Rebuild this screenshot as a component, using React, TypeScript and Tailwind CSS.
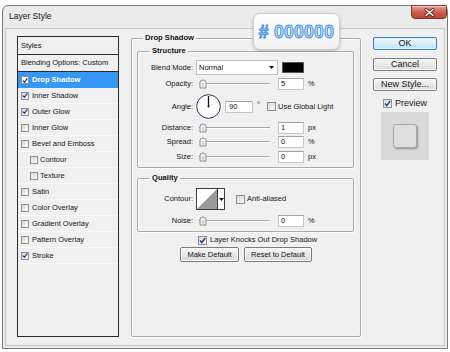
import React from 'react';

type CB = { checked?: boolean; size?: 'sm' | 'md'; active?: boolean };

function Check({ checked, size = 'sm', active }: CB) {
  const box =
    size === 'sm'
      ? 'w-[8px] h-[8px]'
      : 'w-[9px] h-[9px]';
  const bg = active
    ? 'bg-white border-[#8e8f8f]'
    : 'bg-linear-to-br from-[#d8d8d8] to-[#fafafa] border-[#8e8f8f]';
  return (
    <span className={`inline-flex shrink-0 items-center justify-center border ${box} ${bg}`}>
      {checked && (
        <svg width="7" height="7" viewBox="0 0 7 7">
          <path d="M1 3.6 L2.8 5.6 L6.2 1" fill="none" stroke="#1d3c8f" strokeWidth="1.5" />
        </svg>
      )}
    </span>
  );
}

function Group({
  title,
  titleClass,
  className,
  children,
}: {
  title: string;
  titleClass: string;
  className: string;
  children?: React.ReactNode;
}) {
  return (
    <div
      className={`flex flex-col border border-[#ababab] rounded-[2px] shadow-[inset_1px_1px_0_#ffffff,1px_1px_0_#ffffff] ${className}`}
    >
      <div className={`-mt-[6px] w-fit px-[2px] bg-[#f0f0f0] font-bold leading-[10px] text-[7.6px] ${titleClass}`}>
        {title}
      </div>
      {children}
    </div>
  );
}

function Row({ label, cls, children }: { label: string; cls: string; children?: React.ReactNode }) {
  return (
    <div className={`flex items-center ${cls}`}>
      <div className="w-[55px] shrink-0 text-right">{label}</div>
      <div className="ml-[3px] flex h-full items-center">{children}</div>
    </div>
  );
}

function Slider() {
  return (
    <div className="relative flex h-full w-[74px] items-center">
      <div className="ml-[3px] h-[2px] w-[71px] border-t border-b border-t-[#a8a8a8] border-b-white" />
      <svg className="absolute left-[3px] top-[2px]" width="8" height="10" viewBox="0 0 8 10">
        <path d="M1 9 V3.5 Q1 1 4 1 Q7 1 7 3.5 V9 Z" fill="#f3f3f3" stroke="#8c8c8c" strokeWidth="1" />
        <path d="M4 4 V8" stroke="#b5b5b5" strokeWidth="1" />
      </svg>
    </div>
  );
}

function Field({ value, w, pl }: { value: string; w: string; pl: string }) {
  return (
    <div
      className={`h-[12px] border border-[#c6c6c6] border-t-[#a3a3a3] bg-white leading-[10px] ${w} ${pl}`}
    >
      {value}
    </div>
  );
}

function SliderRow({ label, value, unit, cls }: { label: string; value: string; unit: string; cls: string }) {
  return (
    <Row label={label} cls={cls}>
      <Slider />
      <div className="ml-[8px]">
        <Field value={value} w="w-[26px]" pl="pl-[2px]" />
      </div>
      <div className="ml-[4px]">{unit}</div>
    </Row>
  );
}

function GrayBtn({ label, cls }: { label: string; cls: string }) {
  return (
    <div
      className={`flex items-center justify-center rounded-[2px] border border-[#7c7c7c] bg-linear-to-b from-[#f7f7f7] to-[#dadada] shadow-[inset_0_0_0_1px_#fbfbfb] ${cls}`}
    >
      {label}
    </div>
  );
}

const styleItems: { label: string; checked?: boolean; active?: boolean; indent?: boolean }[] = [
  { label: 'Drop Shadow', checked: true, active: true },
  { label: 'Inner Shadow', checked: true },
  { label: 'Outer Glow', checked: true },
  { label: 'Inner Glow' },
  { label: 'Bevel and Emboss' },
  { label: 'Contour', indent: true },
  { label: 'Texture', indent: true },
  { label: 'Satin' },
  { label: 'Color Overlay' },
  { label: 'Gradient Overlay' },
  { label: 'Pattern Overlay' },
  { label: 'Stroke', checked: true },
];

function StylesPanel() {
  return (
    <div className="flex h-[301px] w-[102px] shrink-0 flex-col border border-[#2a2a2a] bg-[#f0f0f0]">
      <div className="flex h-[18px] items-center border-b border-[#2a2a2a] pl-[3px]">Styles</div>
      <div className="flex h-[17px] items-center border-b border-[#2a2a2a] pl-[3px]">Blending Options: Custom</div>
      {styleItems.map((it) => (
        <div
          key={it.label}
          className={`flex h-[16px] items-center ${it.indent ? 'pl-[12px] gap-[2px]' : 'pl-[3px] gap-[3px]'} ${
            it.active ? 'bg-[#3797f5] text-white font-bold' : 'border-b border-b-[#f8f8f8]'
          }`}
        >
          <Check checked={it.checked} active={it.active} />
          <span>{it.label}</span>
        </div>
      ))}
    </div>
  );
}

function AngleDial() {
  return (
    <svg width="25" height="25" viewBox="0 0 25 25">
      <circle cx="12.5" cy="12.5" r="11.8" fill="#ffffff" stroke="#2c3a68" strokeWidth="1" />
      <path d="M12.5 12.5 V2" stroke="#111" strokeWidth="1.3" />
      <circle cx="12.5" cy="12.5" r="1" fill="#111" />
    </svg>
  );
}

function DropShadow() {
  return (
    <Group title="Drop Shadow" titleClass="ml-[11px]" className="ml-[12px] mt-[2px] h-[299px] w-[230px] shrink-0">
      <Group title="Structure" titleClass="ml-[12px]" className="ml-[5px] mt-[8px] w-[217px]">
        <div className="flex flex-col pt-[4px] pb-[3px]">
          <Row label="Blend Mode:" cls="h-[15px]">
            <div className="flex h-[15px] w-[82px] items-center justify-between border border-[#c2c2c2] bg-white pl-[2px] pr-[3px]">
              <span>Normal</span>
              <svg width="5" height="3" viewBox="0 0 5 3">
                <path d="M0 0 H5 L2.5 3 Z" fill="#111" />
              </svg>
            </div>
            <div className="ml-[4px] h-[11px] w-[22px] border border-[#555] bg-black" />
          </Row>
          <SliderRow label="Opacity:" value="5" unit="%" cls="mt-[2px] h-[14px]" />
          <Row label="Angle:" cls="mt-[3px] h-[25px]">
            <AngleDial />
            <div className="ml-[4px]">
              <Field value="90" w="w-[28px]" pl="pl-[3px]" />
            </div>
            <div className="ml-[4px] self-start pt-[6px]">°</div>
            <div className="ml-[7px] flex items-center gap-[2px]">
              <Check size="md" />
              <span>Use Global Light</span>
            </div>
          </Row>
          <SliderRow label="Distance:" value="1" unit="px" cls="mt-[2px] h-[14px]" />
          <SliderRow label="Spread:" value="0" unit="%" cls="h-[14px]" />
          <SliderRow label="Size:" value="0" unit="px" cls="mt-[1px] h-[14px]" />
        </div>
      </Group>
      <Group title="Quality" titleClass="ml-[12px]" className="ml-[5px] mt-[10px] w-[217px]">
        <div className="flex flex-col pt-[5px] pb-[3px]">
          <Row label="Contour:" cls="h-[22px]">
            <div className="flex h-[22px] w-[29px] border border-[#3a3a3a] bg-white">
              <svg width="20" height="20" viewBox="0 0 20 20">
                <path d="M0 20 L20 0 V20 Z" fill="#9a9a9a" />
              </svg>
              <div className="flex w-[7px] items-center justify-center border-l border-[#3a3a3a]">
                <svg width="5" height="3" viewBox="0 0 5 3">
                  <path d="M0 0 H5 L2.5 3 Z" fill="#111" />
                </svg>
              </div>
            </div>
            <div className="ml-[11px] flex items-center gap-[2px]">
              <Check size="md" />
              <span>Anti-aliased</span>
            </div>
          </Row>
          <SliderRow label="Noise:" value="0" unit="%" cls="mt-[4px] h-[14px]" />
        </div>
      </Group>
      <div className="mt-[2px] flex h-[12px] items-center gap-[3px] pl-[66px]">
        <Check checked size="md" />
        <span>Layer Knocks Out Drop Shadow</span>
      </div>
      <div className="mt-[1px] flex gap-[5px] pl-[48px]">
        <GrayBtn label="Make Default" cls="h-[15px] w-[59px]" />
        <GrayBtn label="Reset to Default" cls="h-[15px] w-[68px]" />
      </div>
    </Group>
  );
}

function RightCol() {
  return (
    <div className="ml-[12px] mt-[1px] flex w-[64px] shrink-0 flex-col items-center text-[9px] leading-[11px]">
      <div className="flex h-[13px] w-[64px] items-center justify-center rounded-[2px] border border-[#3c7fb1] bg-linear-to-b from-[#ecf7fd] to-[#bfe4f8] shadow-[inset_0_0_0_1px_#dff2fc]">
        OK
      </div>
      <GrayBtn label="Cancel" cls="mt-[8px] h-[13px] w-[64px]" />
      <GrayBtn label="New Style..." cls="mt-[7px] h-[13px] w-[64px]" />
      <div className="mt-[6px] flex h-[12px] items-center gap-[3px]">
        <Check checked size="md" />
        <span>Preview</span>
      </div>
      <div className="mt-[3px] flex h-[48px] w-[48px] items-center justify-center bg-[#d9d9d9]">
        <div className="h-[24px] w-[24px] rounded-[3px] border border-[#a9a9a9] bg-[#dedede] shadow-[1px_1px_2px_rgba(0,0,0,0.35)]" />
      </div>
    </div>
  );
}

function CloseBtn() {
  return (
    <div className="-mt-[1px] flex h-[14px] w-[36px] items-center justify-center rounded-b-[4px] border border-[#7a3a32] bg-linear-to-b from-[#e2a196] via-[#cc5f4f] to-[#bd4333] shadow-[inset_0_1px_0_rgba(255,255,255,0.5)]">
      <svg width="11" height="9" viewBox="0 0 11 9">
        <path d="M2 1.5 L9 7.5 M9 1.5 L2 7.5" stroke="#5a1e16" strokeWidth="3" strokeLinecap="round" />
        <path d="M2 1.5 L9 7.5 M9 1.5 L2 7.5" stroke="#ffffff" strokeWidth="1.6" strokeLinecap="round" />
      </svg>
    </div>
  );
}

export default function App() {
  return (
    <div className="relative h-[352px] w-[450px] overflow-hidden bg-white text-[7.5px] leading-[10px] text-[#141414] [font-family:'Liberation_Sans',Arial,sans-serif]">
      <div className="ml-[2px] mt-[5px] flex h-[344px] w-[446px] flex-col rounded-t-[6px] border border-[#7b7b7b] bg-[#ebebeb]">
        <div className="flex h-[22px] shrink-0 items-start justify-between">
          <div className="ml-[6px] mt-[5px] text-[8.5px] leading-[10px]">Layer Style</div>
          <CloseBtn />
        </div>
        <div className="flex flex-1 px-[2px] pb-[2px]">
          <div className="flex flex-1 items-start border border-[#c8c8c8] bg-[#f0f0f0] pl-[11px] pt-[7px]">
            <StylesPanel />
            <DropShadow />
            <RightCol />
          </div>
        </div>
      </div>
      <div className="absolute left-[253px] top-[13px] flex h-[37px] w-[87px] items-center justify-center rounded-[7px] border border-[#cdcdcd] bg-linear-to-b from-white to-[#f2f2f2] shadow-[0_1px_3px_rgba(0,0,0,0.25)]">
        <span className="text-[17.5px] font-bold leading-[20px] tracking-[0.3px] text-[#c3e2fa] [-webkit-text-stroke:0.9px_#3a8bd9]">
          # 000000
        </span>
      </div>
    </div>
  );
}
